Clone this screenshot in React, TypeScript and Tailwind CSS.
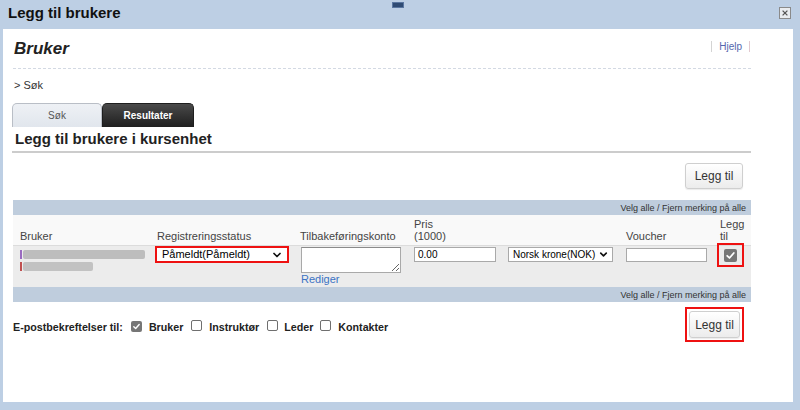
import React from "react";
import { ChevronDown } from "lucide-react";

function Check({ checked, size = 12 }: { checked?: boolean; size?: number }) {
  if (checked) {
    return (
      <span
        className="inline-flex items-center justify-center rounded-[2px] bg-[#767676] shrink-0"
        style={{ width: size, height: size }}
      >
        <svg viewBox="0 0 12 12" width={size - 2} height={size - 2}>
          <path d="M2.4 6.3 L4.9 8.7 L9.6 3.3" stroke="white" strokeWidth="1.9" fill="none" strokeLinecap="round" strokeLinejoin="round" />
        </svg>
      </span>
    );
  }
  return (
    <span
      className="inline-block rounded-[2px] border border-[#6f6f6f] bg-white shrink-0"
      style={{ width: size, height: size }}
    />
  );
}

function Bar() {
  return (
    <div className="h-[15px] bg-[#bfcddd] flex items-center justify-end pr-[5px] text-[9px] leading-[10px] text-[#333]">
      Velg alle / Fjern merking på alle
    </div>
  );
}

function Btn() {
  return (
    <div className="w-full h-full flex items-center justify-center rounded-[3px] border border-[#cfcfcf] bg-gradient-to-b from-[#ffffff] to-[#ececec] text-[12px] text-[#333] shadow-[0_1px_1px_rgba(0,0,0,0.08)]">
      Legg til
    </div>
  );
}

export default function App() {
  return (
    <div className="w-[800px] h-[410px] bg-[#bdcfe4] overflow-hidden font-[Liberation_Sans,Arial,sans-serif] text-[#222]">
      {/* title bar */}
      <div className="relative h-[29px] pl-[8px] pt-[4px]">
        <div className="text-[15px] leading-[18px] font-bold text-[#111]">Legg til brukere</div>
        <div className="absolute left-[392px] top-[2px] w-[12px] h-[6px] bg-[#2f4b73] border border-[#5a76a0]" />
        <div className="absolute left-[779px] top-[7px] w-[12px] h-[12px] border border-[#8a8a8a] bg-[#e9ecef] flex items-center justify-center">
          <svg viewBox="0 0 10 10" width="8" height="8">
            <path d="M2 2 L8 8 M8 2 L2 8" stroke="#555" strokeWidth="1.6" />
          </svg>
        </div>
      </div>

      {/* white panel */}
      <div className="ml-[3px] mr-[7px] h-[373px] bg-white">
        <div className="ml-[10px] w-[738px]">
          {/* header */}
          <div className="h-[40px] border-b border-dashed border-[#d3d9e3] flex justify-between items-start">
            <div className="pl-[1px] pt-[9px] text-[17px] leading-[22px] font-bold italic text-[#222]">Bruker</div>
            <div className="pt-[11px] flex items-center gap-[7px] text-[10px] leading-[13px] mr-[1px]">
              <span className="w-px h-[11px] bg-[#d4d4d4]" />
              <span className="text-[#5566ad]">Hjelp</span>
              <span className="w-px h-[11px] bg-[#e2c9d0]" />
            </div>
          </div>

          {/* breadcrumb */}
          <div className="h-[34px] pt-[9px] pl-[1px] text-[11px] leading-[14px] text-[#333]">&gt; Søk</div>

          {/* tabs */}
          <div className="h-[24px] flex -ml-[1px]">
            <div className="w-[90px] h-[24px] rounded-t-[5px] border border-b-0 border-[#b9bec6] bg-gradient-to-b from-[#eef1f5] to-[#e1e6ed] flex items-center justify-center text-[10px] text-[#555]">
              Søk
            </div>
            <div className="w-[92px] h-[24px] rounded-t-[5px] border border-b-0 border-[#1e1e1e] bg-gradient-to-b from-[#4a4a4a] to-[#1f1f1f] flex items-center justify-center text-[10px] font-bold text-white">
              Resultater
            </div>
          </div>

          {/* heading */}
          <div className="h-[26px] border-b-2 border-[#cccccc] pl-[3px] pt-[3px] text-[15px] leading-[18px] font-bold text-[#222] -ml-[1px]">
            Legg til brukere i kursenhet
          </div>

          {/* top button */}
          <div className="h-[47px] pt-[10px] flex justify-end pr-[8px]">
            <div className="w-[58px] h-[26px]">
              <Btn />
            </div>
          </div>

          {/* table */}
          <Bar />
          <div className="h-[31px] border-b border-[#dcdcdc] bg-[#f9f9f9] flex items-end pb-[3px] text-[11px] leading-[12px] text-[#444]">
            <div className="w-[137px] pl-[7px]">Bruker</div>
            <div className="w-[143px] pl-[7px]">Registreringsstatus</div>
            <div className="w-[114px] pl-[7px]">Tilbakeføringskonto</div>
            <div className="w-[94px] pl-[7px]">Pris<br />(1000)</div>
            <div className="w-[118px]" />
            <div className="w-[94px] pl-[7px]">Voucher</div>
            <div className="w-[38px] pl-[7px]">Legg<br />til</div>
          </div>
          <div className="h-[41px] bg-[#ececec] flex items-start text-[11px] text-[#111]">
            <div className="w-[137px] pl-[7px] pt-[4px] flex flex-col gap-[3px]">
              <div className="flex items-center">
                <span className="w-[2px] h-[9px] bg-[#9a6bc0]" />
                <span className="ml-[1px] w-[122px] h-[9px] rounded-[2px] bg-[#bdbdbd] blur-[0.6px]" />
              </div>
              <div className="flex items-center">
                <span className="w-[2px] h-[9px] bg-[#c05050]" />
                <span className="ml-[1px] w-[70px] h-[9px] rounded-[2px] bg-[#c2c2c2] blur-[0.6px]" />
              </div>
            </div>
            <div className="w-[143px] pl-[5px]">
              <div className="w-[134px] h-[17px] border-2 border-[#ee1111] bg-white flex items-center justify-between pl-[5px] pr-[4px] text-[11px] leading-[13px] text-black">
                <span>Påmeldt(Påmeldt)</span>
                <ChevronDown size={12} strokeWidth={3.5} color="#111" />
              </div>
            </div>
            <div className="w-[114px] pl-[8px] pt-[1px]">
              <textarea
                readOnly
                className="block w-[100px] h-[26px] border border-[#a9a9a9] border-t-[#8a8a8a] bg-white resize outline-none"
              />
              <div className="text-[11px] leading-[13px] text-[#3b73c4]">Rediger</div>
            </div>
            <div className="w-[94px] pl-[7px] pt-[1px]">
              <div className="w-[82px] h-[15px] border border-[#a9a9a9] bg-white flex items-center pl-[3px] text-[10px] leading-[12px] text-black">
                0.00
              </div>
            </div>
            <div className="w-[118px] pl-[7px] pt-[1px]">
              <div className="w-[105px] h-[15px] border border-[#a9a9a9] bg-white flex items-center justify-between pl-[4px] pr-[3px] text-[10px] leading-[12px] text-black">
                <span>Norsk krone(NOK)</span>
                <ChevronDown size={11} strokeWidth={3.5} color="#111" />
              </div>
            </div>
            <div className="w-[94px] pl-[7px] pt-[2px]">
              <div className="w-[81px] h-[14px] border border-[#a9a9a9] bg-white" />
            </div>
            <div className="w-[38px] pl-[4px]">
              <div className="-mt-[3px] w-[27px] h-[24px] border-2 border-[#ee1111] flex items-center justify-center">
                <Check checked size={13} />
              </div>
            </div>
          </div>
          <Bar />

          {/* bottom */}
          <div className="flex justify-between items-start">
            <div className="mt-[17px] flex items-center text-[10.7px] leading-[16px] font-bold text-[#222]">
              <span>E-postbekreftelser til:</span>
              <span className="ml-[8px]"><Check checked size={11} /></span>
              <span className="ml-[7px]">Bruker</span>
              <span className="ml-[8px]"><Check size={11} /></span>
              <span className="ml-[7px]">Instruktør</span>
              <span className="ml-[8px]"><Check size={11} /></span>
              <span className="ml-[6px]">Leder</span>
              <span className="ml-[7px]"><Check size={11} /></span>
              <span className="ml-[7px]">Kontakter</span>
            </div>
            <div className="mt-[5px] mr-[7px] w-[59px] h-[35px] border-2 border-[#ee1111] p-[2px]">
              <Btn />
            </div>
          </div>
        </div>
      </div>
    </div>
  );
}
